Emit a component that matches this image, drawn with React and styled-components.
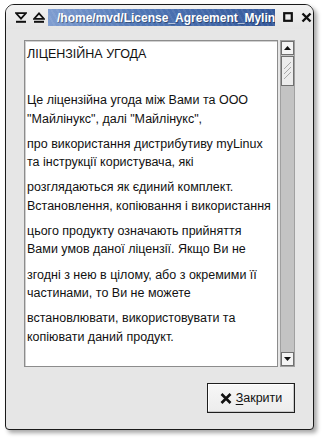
import React from 'react'
import styled, { createGlobalStyle } from 'styled-components'

const GlobalStyle = createGlobalStyle`
  html, body {
    margin: 0;
    padding: 0;
    background: #ffffff;
    font-family: "Liberation Sans", Arial, sans-serif;
  }
`

const Page = styled.div`
  width: 324px;
  height: 440px;
  padding: 4px 0 0 5px;
  box-sizing: border-box;
`

const Window = styled.div`
  width: 309px;
  height: 426px;
  box-sizing: border-box;
  border: 1px solid #1a1a1a;
  border-radius: 9px 9px 4px 4px;
  background: #e6e6e6;
  box-shadow: 3px 3px 4px rgba(0, 0, 0, 0.35);
  display: flex;
  flex-direction: column;
  overflow: hidden;
`

const TitleBar = styled.div`
  height: 24px;
  display: flex;
  align-items: center;
  padding: 0 4px 0 6px;
  background: linear-gradient(#f2f2f2, #e4e4e4);
`

const FrameButton = styled.div`
  width: 18px;
  height: 18px;
  display: flex;
  align-items: center;
  justify-content: center;
  flex: none;
`

const TitleLabel = styled.div`
  width: 227px;
  flex: none;
  height: 17px;
  margin: 1px 0 0 0;
  padding-left: 9px;
  box-sizing: border-box;
  display: flex;
  align-items: center;
  color: #ffffff;
  font-weight: bold;
  font-size: 12px;
  white-space: nowrap;
  overflow: hidden;
  background:
    repeating-linear-gradient(60deg, rgba(255,255,255,0.07) 0 2px, rgba(255,255,255,0) 2px 5px),
    linear-gradient(90deg, #7f9dd0 0%, #5077b6 40%, #34589a 100%);
  text-shadow: 1px 1px 0 rgba(0,0,0,0.35);
`

const RightButtons = styled.div`
  display: flex;
  margin-left: 4px;
`

const Body = styled.div`
  flex: 1;
  display: flex;
  flex-direction: column;
  padding: 11px 18px 16px 18px;
  gap: 16px;
`

const ScrollArea = styled.div`
  flex: 1;
  display: flex;
  gap: 2px;
  min-height: 0;
`

const TextView = styled.div`
  flex: 1;
  background: #ffffff;
  border: 1px solid #8c8c8c;
  box-shadow: inset 1px 1px 0 #d0d0d0;
  padding: 4px 2px;
  font-size: 12.5px;
  color: #111111;
  overflow: hidden;
`

const Para = styled.p`
  margin: 0 0 ${p => p.$after ?? 7}px 0;
  line-height: 18.3px;
  white-space: nowrap;
`

const Scrollbar = styled.div`
  width: 15px;
  display: flex;
  flex-direction: column;
  background: #c3c3c3;
  border: 1px solid #a0a0a0;
  box-sizing: border-box;
`

const StepButton = styled.div`
  height: 14px;
  background: #f4f4f4;
  border: 1px solid #707070;
  box-sizing: border-box;
  display: flex;
  align-items: center;
  justify-content: center;
`

const Thumb = styled.div`
  height: 30px;
  margin-top: 1px;
  background: #ececec;
  border: 1px solid #707070;
  box-sizing: border-box;
  display: flex;
  align-items: center;
  justify-content: center;
`

const Track = styled.div`
  flex: 1;
`

const ButtonRow = styled.div`
  display: flex;
  justify-content: flex-end;
`

const CloseButton = styled.button`
  width: 88px;
  height: 30px;
  border: 1px solid #1e1e1e;
  background: linear-gradient(#f7f7f7, #ececec);
  display: flex;
  align-items: center;
  justify-content: center;
  gap: 4px;
  font-family: "Liberation Sans", Arial, sans-serif;
  font-size: 12.5px;
  color: #111111;
  padding: 0;
  box-shadow: inset -1px -1px 0 #c8c8c8, inset 1px 1px 0 #ffffff;
  u {
    text-decoration: underline;
    text-underline-offset: 2px;
  }
`

const Arrow = ({ up }) => (
  <svg width="7" height="4" viewBox="0 0 7 4">
    <path d={up ? 'M0 4 L3.5 0 L7 4 Z' : 'M0 0 L3.5 4 L7 0 Z'} fill="#111" />
  </svg>
)

export default function App() {
  return (
    <>
      <GlobalStyle />
      <Page>
        <Window>
          <TitleBar>
            <FrameButton>
              <svg width="12" height="11" viewBox="0 0 12 11">
                <path d="M1.2 1.2 H10.8 L6 6.6 Z" fill="none" stroke="#111" strokeWidth="1.7" strokeLinejoin="miter" />
                <rect x="1" y="8.8" width="10" height="2" fill="#111" />
              </svg>
            </FrameButton>
            <FrameButton>
              <svg width="12" height="11" viewBox="0 0 12 11">
                <path d="M1.2 6.8 H10.8 L6 1.4 Z" fill="none" stroke="#111" strokeWidth="1.7" strokeLinejoin="miter" />
                <rect x="1" y="8.8" width="10" height="2" fill="#111" />
              </svg>
            </FrameButton>
            <TitleLabel>/home/mvd/License_Agreement_Mylin</TitleLabel>
            <RightButtons>
              <FrameButton>
                <svg width="10" height="10" viewBox="0 0 10 10">
                  <rect x="1.2" y="1.2" width="7.6" height="7.6" fill="none" stroke="#111" strokeWidth="2.2" />
                </svg>
              </FrameButton>
              <FrameButton>
                <svg width="11" height="11" viewBox="0 0 11 11">
                  <path d="M1.5 1.5 L9.5 9.5 M9.5 1.5 L1.5 9.5" stroke="#111" strokeWidth="2.4" />
                </svg>
              </FrameButton>
            </RightButtons>
          </TitleBar>
          <Body>
            <ScrollArea>
              <TextView>
                <Para $after={28}>ЛІЦЕНЗІЙНА УГОДА</Para>
                <Para>Це ліцензійна угода між Вами та ООО<br />"Майлінукс", далі "Майлінукс",</Para>
                <Para>про використання дистрибутиву myLinux<br />та інструкції користувача, які</Para>
                <Para>розглядаються як єдиний комплект.<br />Встановлення, копіювання і використання</Para>
                <Para>цього продукту означають прийняття<br />Вами умов даної ліцензії. Якщо Ви не</Para>
                <Para>згодні з нею в цілому, або з окремими її<br />частинами, то Ви не можете</Para>
                <Para>встановлювати, використовувати та<br />копіювати даний продукт.</Para>
              </TextView>
              <Scrollbar>
                <StepButton><Arrow up /></StepButton>
                <Thumb>
                  <svg width="9" height="20" viewBox="0 0 9 20">
                    <path d="M1 8 L8 1 M1 13 L8 6 M1 18 L8 11" stroke="#a8a8a8" strokeWidth="1" />
                  </svg>
                </Thumb>
                <Track />
                <StepButton><Arrow /></StepButton>
              </Scrollbar>
            </ScrollArea>
            <ButtonRow>
              <CloseButton>
                <svg width="12" height="11" viewBox="0 0 12 11">
                  <path d="M1.5 1 L10.5 10 M10.5 1 L1.5 10" stroke="#111" strokeWidth="2.6" />
                </svg>
                <span><u>З</u>акрити</span>
              </CloseButton>
            </ButtonRow>
          </Body>
        </Window>
      </Page>
    </>
  )
}
